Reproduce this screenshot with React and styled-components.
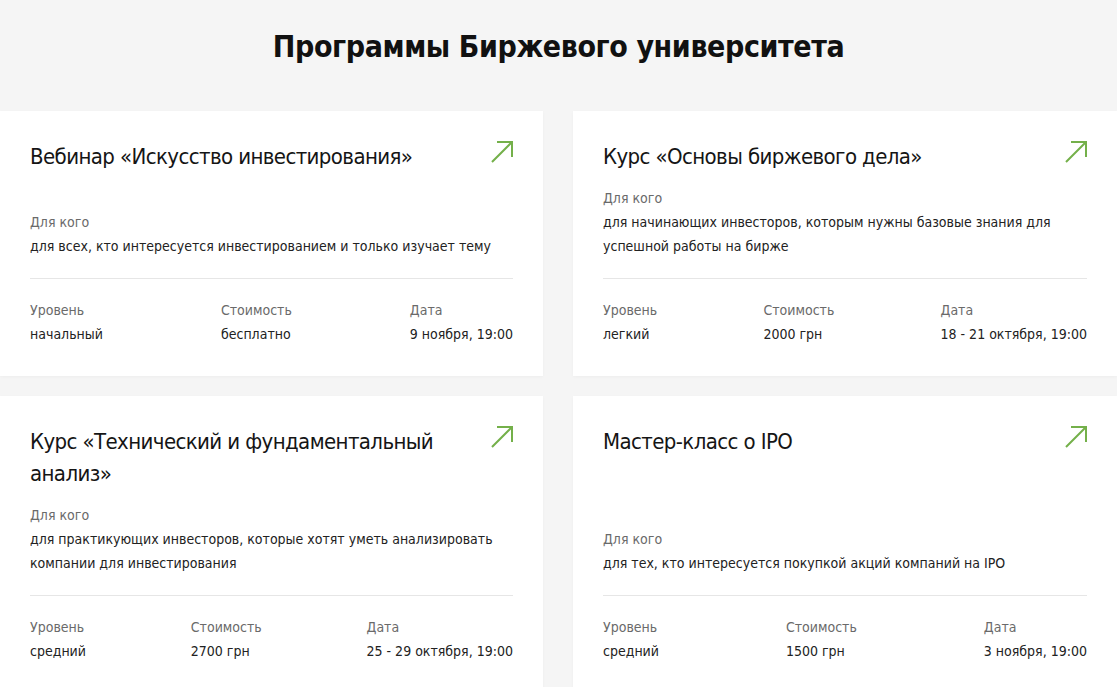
import React from 'react';
import styled, { createGlobalStyle } from 'styled-components';

const GlobalStyle = createGlobalStyle`
  html, body {
    margin: 0;
    padding: 0;
    background: #f5f5f5;
  }
  body {
    font-family: "DejaVu Sans Condensed", "Liberation Sans", sans-serif;
    color: #1b1b1b;
  }
  * {
    box-sizing: border-box;
  }
`;

const Page = styled.section`
  width: 1117px;
  padding-top: 26px;
`;

const Heading = styled.h1`
  margin: 0 0 43px;
  text-align: center;
  font-size: 30px;
  line-height: 42px;
  letter-spacing: -0.4px;
  font-weight: 700;
  color: #111;
`;

const Grid = styled.div`
  display: grid;
  grid-template-columns: 543px 544px;
  column-gap: 30px;
  row-gap: 20px;
`;

const Card = styled.article`
  display: flex;
  flex-direction: column;
  background: #fff;
  padding: 30px;
  box-shadow: 0 1px 3px rgba(0, 0, 0, 0.03);
`;

const Top = styled.div`
  display: flex;
  align-items: flex-start;
  justify-content: space-between;
  gap: 40px;
  flex: 1;
`;

const Title = styled.h2`
  margin: 0;
  font-size: 22px;
  line-height: 32px;
  letter-spacing: -0.6px;
  font-weight: 400;
  color: #151515;
`;

const Arrow = styled.svg`
  flex: none;
  width: 22px;
  height: 22px;
  color: #74b04a;
`;

const Audience = styled.div`
  margin-top: 13px;
  padding-bottom: 20px;
  border-bottom: 1px solid #e6e6e6;
`;

const Label = styled.div`
  font-size: 14px;
  line-height: 24px;
  color: #6a6a6a;
`;

const Value = styled.div`
  font-size: 14px;
  line-height: 24px;
  color: #222;
`;

const Meta = styled.div`
  display: flex;
  justify-content: space-between;
  padding-top: 19px;
`;

const programs = [
  {
    title: 'Вебинар «Искусство инвестирования»',
    audience: 'для всех, кто интересуется инвестированием и только изучает тему',
    level: 'начальный',
    price: 'бесплатно',
    date: '9 ноября, 19:00',
  },
  {
    title: 'Курс «Основы биржевого дела»',
    audience: 'для начинающих инвесторов, которым нужны базовые знания для успешной работы на бирже',
    level: 'легкий',
    price: '2000 грн',
    date: '18 - 21 октября, 19:00',
  },
  {
    title: 'Курс «Технический и фундаментальный анализ»',
    audience: 'для практикующих инвесторов, которые хотят уметь анализировать компании для инвестирования',
    level: 'средний',
    price: '2700 грн',
    date: '25 - 29 октября, 19:00',
  },
  {
    title: 'Мастер-класс о IPO',
    audience: 'для тех, кто интересуется покупкой акций компаний на IPO',
    level: 'средний',
    price: '1500 грн',
    date: '3 ноября, 19:00',
  },
];

function ArrowIcon() {
  return (
    <Arrow viewBox="0 0 22 22" fill="none" stroke="currentColor" strokeWidth="2">
      <path d="M1 21 L21 1 M6 1 H21 V16" />
    </Arrow>
  );
}

function ProgramCard({ program }) {
  return (
    <Card>
      <Top>
        <Title>{program.title}</Title>
        <ArrowIcon />
      </Top>
      <Audience>
        <Label>Для кого</Label>
        <Value>{program.audience}</Value>
      </Audience>
      <Meta>
        <div>
          <Label>Уровень</Label>
          <Value>{program.level}</Value>
        </div>
        <div>
          <Label>Стоимость</Label>
          <Value>{program.price}</Value>
        </div>
        <div>
          <Label>Дата</Label>
          <Value>{program.date}</Value>
        </div>
      </Meta>
    </Card>
  );
}

export default function App() {
  return (
    <>
      <GlobalStyle />
      <Page>
        <Heading>Программы Биржевого университета</Heading>
        <Grid>
          {programs.map((p) => (
            <ProgramCard key={p.title} program={p} />
          ))}
        </Grid>
      </Page>
    </>
  );
}
